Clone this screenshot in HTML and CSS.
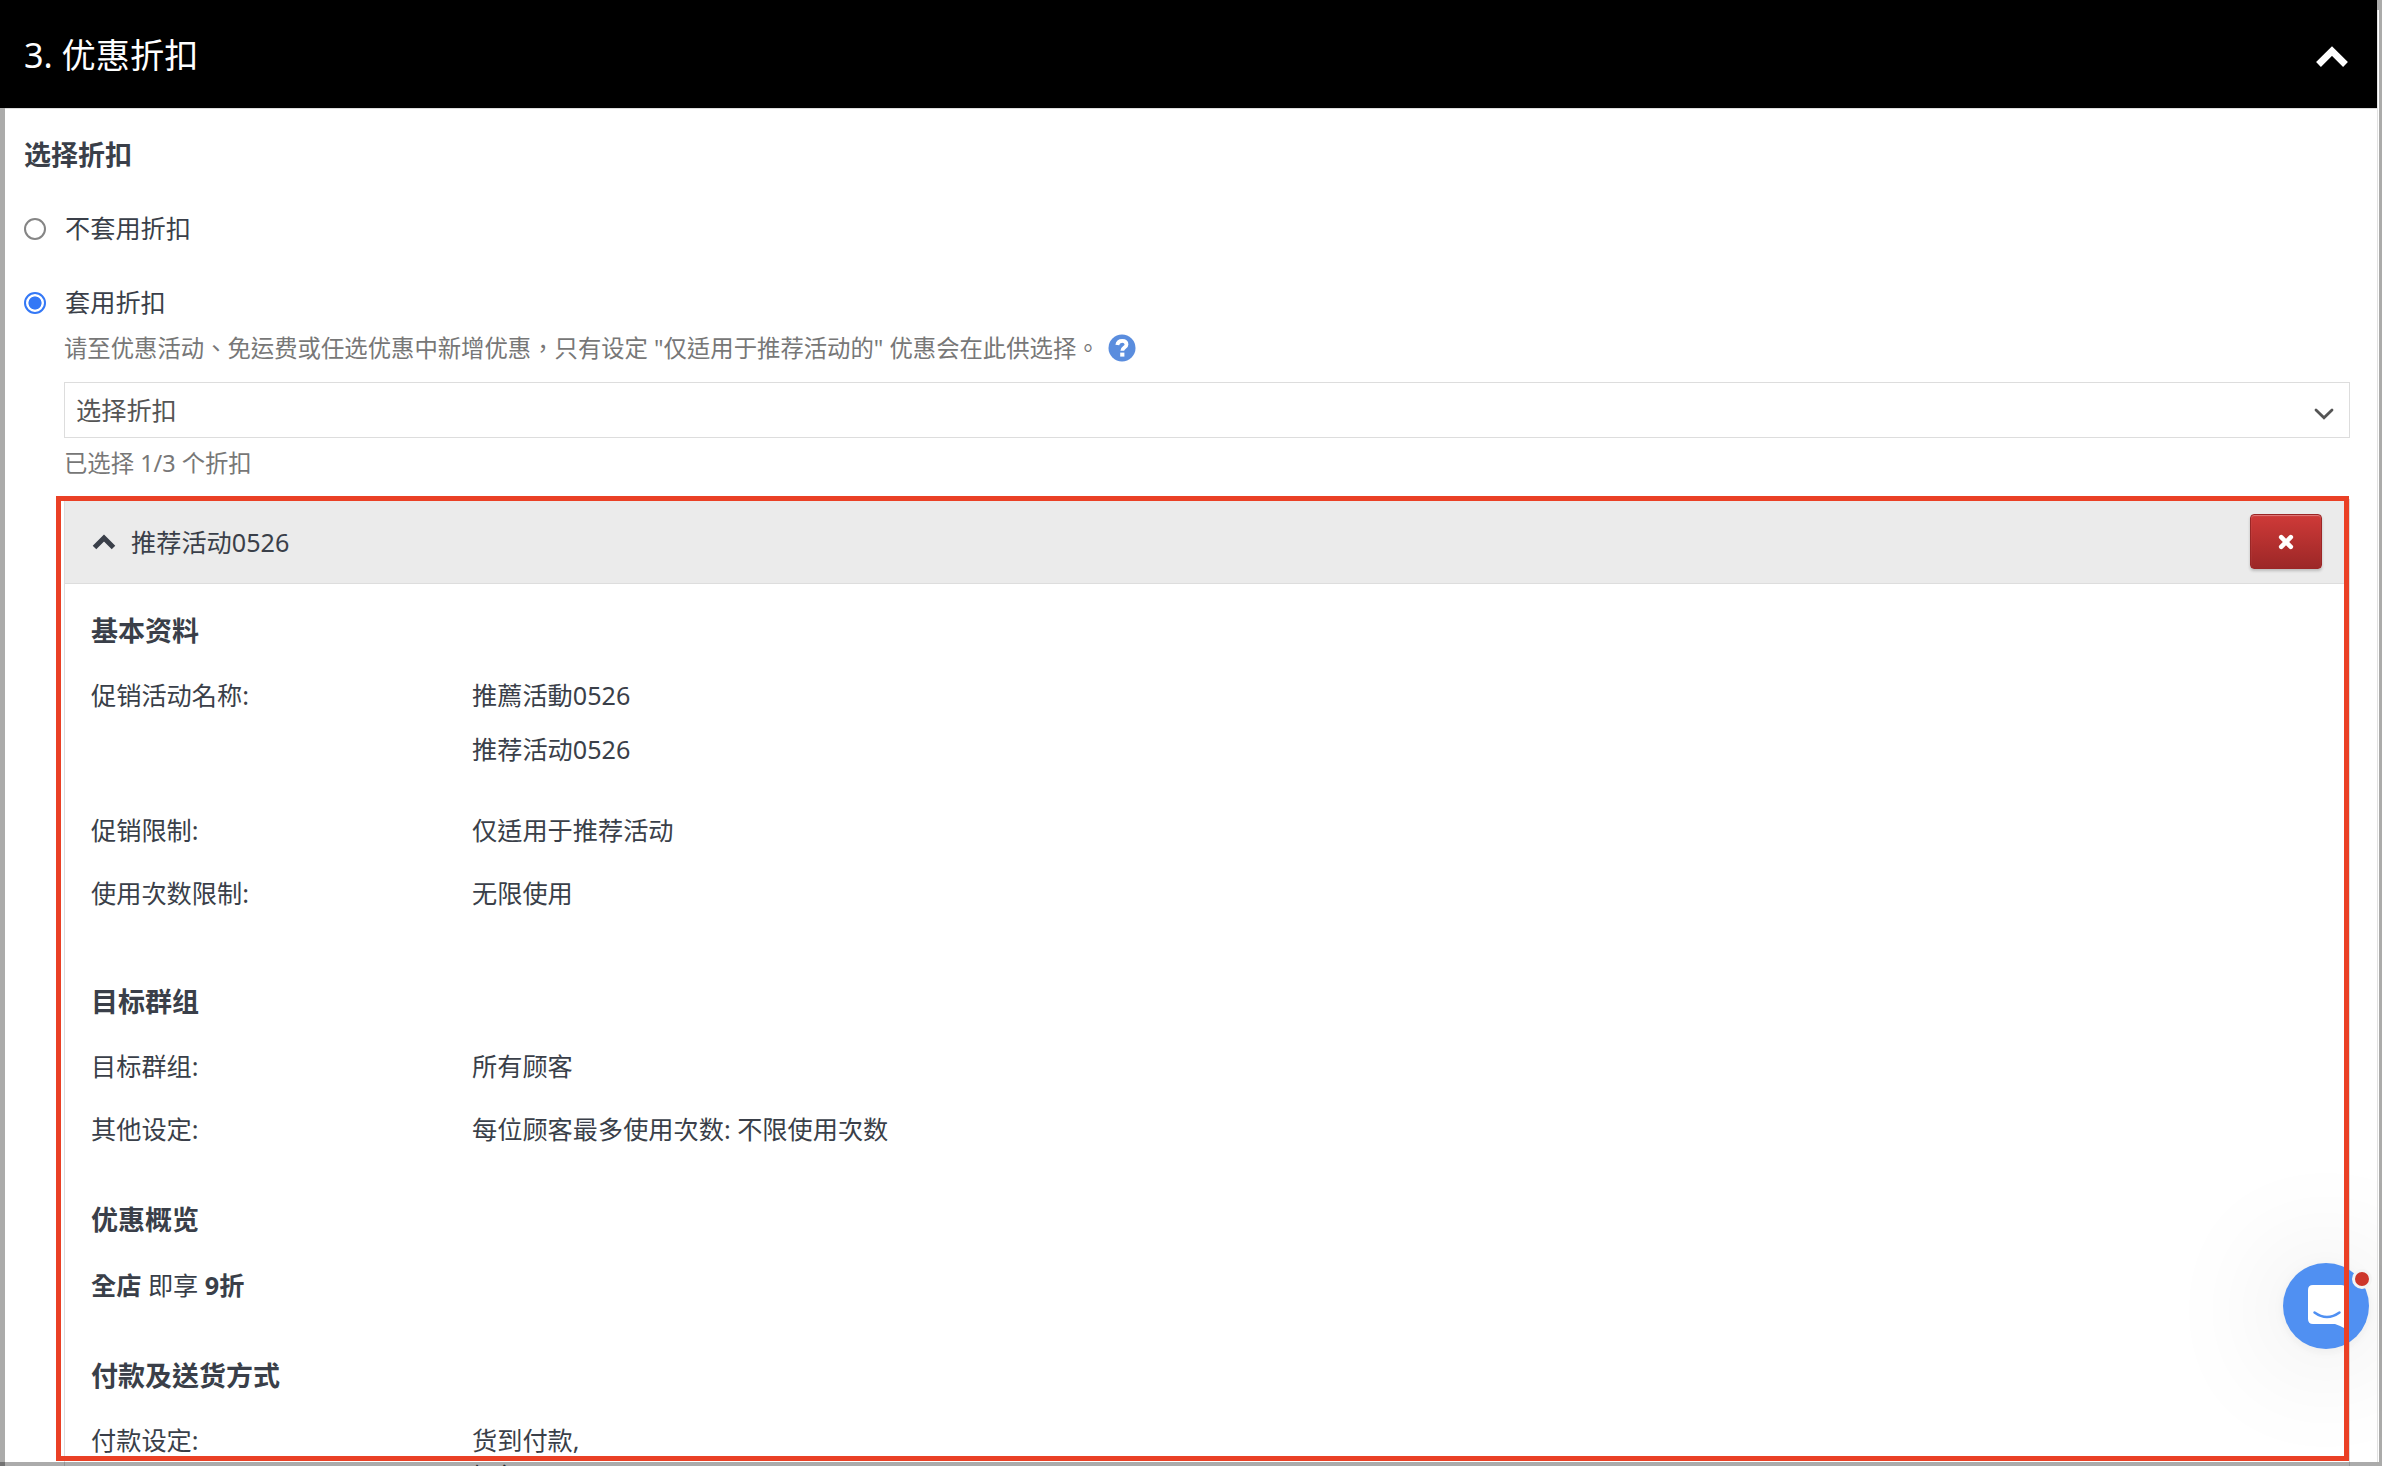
FILE: index.html
```html
<!DOCTYPE html>
<html lang="zh-Hant">
<head>
<meta charset="utf-8">
<title>优惠折扣</title>
<link rel="stylesheet" href="styles.css">
</head>
<body>
<div class="page">
  <main class="panel">
    <header class="panel-header">
      <h1 class="panel-title">3. 优惠折扣</h1>
      <svg class="panel-toggle" viewBox="0 0 34 22"><path d="M3.500 18.500 17 5 30.500 18.500" fill="none" stroke="#fff" stroke-width="6.800"/></svg>
    </header>
    <div class="panel-body">
      <h2 class="section-title">选择折扣</h2>
      <label class="option"><span class="radio"></span>不套用折扣</label>
      <label class="option"><span class="radio radio-on"></span>套用折扣</label>
      <div class="discount">
        <p class="hint">请至优惠活动、免运费或任选优惠中新增优惠，只有设定 "仅适用于推荐活动的" 优惠会在此供选择。<svg class="help" viewBox="0 0 28 28"><circle cx="14" cy="14" r="13.500" fill="#5a8dde"/><path d="M9.300 11C9.700 8 11.400 6.800 14.200 6.800c2.700 0 4.300 1.500 4.300 3.600 0 3.200-4.200 3.100-4.200 6.300" fill="none" stroke="#fff" stroke-width="3.800"/><rect x="12.200" y="18.600" width="4.200" height="4" fill="#fff"/></svg></p>
        <div class="select"><span>选择折扣</span><svg class="select-arrow" viewBox="0 0 20 12"><path d="M2 2l8 7.800L18 2" fill="none" stroke="#555" stroke-width="2.800" stroke-linecap="round"/></svg></div>
        <p class="count">已选择 1/3 个折扣</p>
        <section class="card">
          <header class="card-header">
            <svg class="card-toggle" viewBox="0 0 24 16"><path d="M2.500 13.500 12 4l9.500 9.500" fill="none" stroke="#3a3f49" stroke-width="5"/></svg>
            <span class="card-title">推荐活动0526</span>
            <button class="remove" type="button"><svg class="cross" viewBox="0 0 16 16"><path d="M3.200 3.200l9.600 9.600M12.800 3.200l-9.600 9.600" stroke="#fff" stroke-width="4.600" stroke-linecap="round"/></svg></button>
          </header>
          <div class="card-body">
            <h3 class="group-title">基本资料</h3>
            <dl class="field field-names"><dt>促销活动名称:</dt><dd><p>推薦活動0526</p><p>推荐活动0526</p></dd></dl>
            <dl class="field"><dt>促销限制:</dt><dd>仅适用于推荐活动</dd></dl>
            <dl class="field"><dt>使用次数限制:</dt><dd>无限使用</dd></dl>
            <h3 class="group-title group-target">目标群组</h3>
            <dl class="field"><dt>目标群组:</dt><dd>所有顾客</dd></dl>
            <dl class="field"><dt>其他设定:</dt><dd>每位顾客最多使用次数: 不限使用次数</dd></dl>
            <h3 class="group-title group-summary">优惠概览</h3>
            <p class="summary"><b>全店</b> 即享 <b>9折</b></p>
            <h3 class="group-title group-payment">付款及送货方式</h3>
            <dl class="field field-payment"><dt>付款设定:</dt><dd><p>货到付款,</p><p>银行</p></dd></dl>
          </div>
        </section>
      </div>
    </div>
  </main>
  <div class="chat">
    <svg class="chat-icon" viewBox="0 0 38 44"><path d="M5 0H33Q38 0 38 5V44Q33 41 27 39H5Q0 39 0 34V5Q0 0 5 0Z" fill="#fff"/><path d="M6.500 27.500q12.500 9 25 0" fill="none" stroke="#5090f2" stroke-width="2.500" stroke-linecap="round"/></svg>
    <span class="chat-badge"></span>
  </div>
  <div class="shade"></div>
  <div class="highlight"></div>
  <div class="edge"></div>
</div>
</body>
</html>
```
FILE: styles.css
```css
* { box-sizing: border-box; margin: 0; padding: 0; }
body {
  background: #a9a9a8;
  color: #3a3f49;
  font: 25.200px/38px "Noto Sans", "Noto Sans CJK TC", sans-serif;
  overflow: hidden;
}
.page { position: relative; width: 2382px; height: 1466px; overflow: hidden; background: #ababaa; }
.panel { width: 2377px; height: 1466px; overflow: hidden; }
.panel-header {
  display: flex; align-items: center; justify-content: space-between;
  height: 108px; padding: 1px 28px 0 24px; background: #000; color: #fff;
}
.panel-title { font-size: 34.200px; font-weight: 400; line-height: 50px; }
.panel-toggle { width: 34px; height: 22px; margin-top: 4px; }
.panel-body { height: 1358px; margin-left: 5px; padding: 27px 27px 0 19px; border-top: 1px solid #ddd; background: #fff; }
.section-title { font-size: 27px; line-height: 38px; }
.option { display: flex; align-items: center; height: 38px; margin-top: 35px; }
.option + .option { margin-top: 36px; }
.radio { position: relative; top: 1px; width: 22px; height: 22px; margin-right: 19px; border: 2px solid #858585; border-radius: 50%; }
.radio-on { border: 2px solid #3478f6; background: radial-gradient(circle, #3478f6 6.200px, #fff 6.900px); }
.discount { padding-left: 40px; }
.hint { display: flex; align-items: center; height: 38px; margin-top: 8px; color: #777; font-size: 23.360px; }
.help { width: 28px; height: 28px; margin-left: 8px; }
.select {
  display: flex; align-items: center; justify-content: space-between;
  height: 56px; margin-top: 15px; padding: 0 15px 0 11px; border: 1px solid #ddd; color: #555;
}
.select-arrow { width: 20px; height: 12px; margin-top: 7px; }
.count { margin-top: 6px; color: #777; font-size: 23.360px; }
.card { height: 1100px; margin-top: 17px; border: 1px solid #ddd; }
.card-header { display: flex; align-items: center; height: 84px; padding: 0 27px; background: #ebebeb; border-bottom: 1px solid #ddd; }
.card-toggle { width: 24px; height: 16px; margin-top: 1px; }
.card-title { flex: 1; margin-left: 15px; }
.remove {
  display: flex; align-items: center; justify-content: center;
  width: 72px; height: 55px; border: 1px solid #9b2626; border-radius: 4px;
  background: linear-gradient(#cf3a38, #9c2727);
  box-shadow: inset 0 1px 1px rgba(255,255,255,.35), 0 2px 3px rgba(0,0,0,.2);
}
.cross { width: 16px; height: 16px; }
.card-body { padding: 28px 27px 0 26px; }
.group-title { font-size: 27px; line-height: 38px; }
.field { display: flex; margin-top: 25px; }
.field dt { width: 381px; }
.field-names p + p { margin-top: 16px; }
.group-title + .field-names { margin-top: 27px; }
.field-names + .field { margin-top: 43px; }
.group-title + .field { margin-top: 26px; }
.group-target { margin-top: 71px; }
.group-summary { margin-top: 53px; }
.summary { margin-top: 27px; }
.group-payment { margin-top: 53px; }
.field-payment p { line-height: 36px; margin-top: 1px; }
.field-payment p + p { margin-top: 0; }
.edge { position: absolute; right: 3px; top: 10px; width: 2px; height: 1452px; background: linear-gradient(90deg, #e2e2e2 50%, #fff 50%); }
.shade { position: absolute; left: 0; bottom: 0; width: 2377px; height: 4px; background: rgba(0,0,0,.33); }
.chat {
  position: absolute; left: 2283px; top: 1263px; width: 86px; height: 86px; border-radius: 50%;
  background: #5090f2; box-shadow: 0 2px 12px rgba(0,0,0,.05), 0 4px 120px 10px rgba(0,0,0,.1);
}
.chat-icon { position: absolute; left: 25px; top: 22px; width: 38px; height: 44px; }
.chat-badge { position: absolute; left: 69px; top: 6px; width: 20px; height: 20px; }
.chat-badge { border: 3px solid #f4f4f4; border-radius: 50%; background: #cd362b; box-sizing: content-box; width: 14px; height: 14px; }
.highlight { position: absolute; left: 56px; top: 496px; width: 2293px; height: 965px; border: 5px solid #ea4025; }
```
